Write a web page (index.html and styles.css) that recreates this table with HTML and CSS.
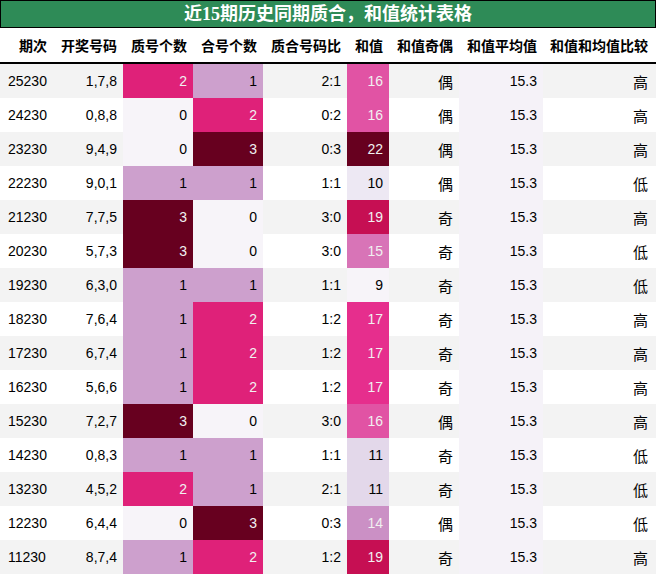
FILE: index.html
```html
<!DOCTYPE html>
<html lang="zh">
<head>
<meta charset="utf-8">
<title>近15期历史同期质合，和值统计表格</title>
<link rel="stylesheet" href="styles.css">
</head>
<body>
<div class="title">近15期历史同期质合，和值统计表格</div>
<table class="stats">
  <colgroup>
    <col class="w-qi"><col class="w-kj"><col class="w-n"><col class="w-n"><col class="w-bi"><col class="w-hz"><col class="w-n"><col class="w-bi"><col class="w-last">
  </colgroup>
  <thead>
    <tr><th>期次</th><th>开奖号码</th><th>质号个数</th><th>合号个数</th><th>质合号码比</th><th>和值</th><th>和值奇偶</th><th>和值平均值</th><th class="last">和值和均值比较</th></tr>
  </thead>
  <tbody>
    <tr><td class="left">25230</td><td>1,7,8</td><td class="q2">2</td><td class="q1">1</td><td>2:1</td><td class="s16">16</td><td class="cjk">偶</td><td class="avg">15.3</td><td class="cjk last">高</td></tr>
    <tr><td class="left">24230</td><td>0,8,8</td><td class="q0">0</td><td class="q2">2</td><td>0:2</td><td class="s16">16</td><td class="cjk">偶</td><td class="avg">15.3</td><td class="cjk last">高</td></tr>
    <tr><td class="left">23230</td><td>9,4,9</td><td class="q0">0</td><td class="q3">3</td><td>0:3</td><td class="s22">22</td><td class="cjk">偶</td><td class="avg">15.3</td><td class="cjk last">高</td></tr>
    <tr><td class="left">22230</td><td>9,0,1</td><td class="q1">1</td><td class="q1">1</td><td>1:1</td><td class="s10">10</td><td class="cjk">偶</td><td class="avg">15.3</td><td class="cjk last">低</td></tr>
    <tr><td class="left">21230</td><td>7,7,5</td><td class="q3">3</td><td class="q0">0</td><td>3:0</td><td class="s19">19</td><td class="cjk">奇</td><td class="avg">15.3</td><td class="cjk last">高</td></tr>
    <tr><td class="left">20230</td><td>5,7,3</td><td class="q3">3</td><td class="q0">0</td><td>3:0</td><td class="s15">15</td><td class="cjk">奇</td><td class="avg">15.3</td><td class="cjk last">低</td></tr>
    <tr><td class="left">19230</td><td>6,3,0</td><td class="q1">1</td><td class="q1">1</td><td>1:1</td><td class="s9">9</td><td class="cjk">奇</td><td class="avg">15.3</td><td class="cjk last">低</td></tr>
    <tr><td class="left">18230</td><td>7,6,4</td><td class="q1">1</td><td class="q2">2</td><td>1:2</td><td class="s17">17</td><td class="cjk">奇</td><td class="avg">15.3</td><td class="cjk last">高</td></tr>
    <tr><td class="left">17230</td><td>6,7,4</td><td class="q1">1</td><td class="q2">2</td><td>1:2</td><td class="s17">17</td><td class="cjk">奇</td><td class="avg">15.3</td><td class="cjk last">高</td></tr>
    <tr><td class="left">16230</td><td>5,6,6</td><td class="q1">1</td><td class="q2">2</td><td>1:2</td><td class="s17">17</td><td class="cjk">奇</td><td class="avg">15.3</td><td class="cjk last">高</td></tr>
    <tr><td class="left">15230</td><td>7,2,7</td><td class="q3">3</td><td class="q0">0</td><td>3:0</td><td class="s16">16</td><td class="cjk">偶</td><td class="avg">15.3</td><td class="cjk last">高</td></tr>
    <tr><td class="left">14230</td><td>0,8,3</td><td class="q1">1</td><td class="q1">1</td><td>1:1</td><td class="s11">11</td><td class="cjk">奇</td><td class="avg">15.3</td><td class="cjk last">低</td></tr>
    <tr><td class="left">13230</td><td>4,5,2</td><td class="q2">2</td><td class="q1">1</td><td>2:1</td><td class="s11">11</td><td class="cjk">奇</td><td class="avg">15.3</td><td class="cjk last">低</td></tr>
    <tr><td class="left">12230</td><td>6,4,4</td><td class="q0">0</td><td class="q3">3</td><td>0:3</td><td class="s14">14</td><td class="cjk">偶</td><td class="avg">15.3</td><td class="cjk last">低</td></tr>
    <tr><td class="left">11230</td><td>8,7,4</td><td class="q1">1</td><td class="q2">2</td><td>1:2</td><td class="s19">19</td><td class="cjk">奇</td><td class="avg">15.3</td><td class="cjk last">高</td></tr>
  </tbody>
</table>
</body>
</html>
```

FILE: styles.css
```css
html, body {
  margin: 0;
  padding: 0;
  background: #ffffff;
}

.title {
  height: 26px;
  line-height: 26px;
  background: #2e8b57;
  border: 1px solid #000000;
  color: #ffffff;
  text-align: center;
  font-family: "Liberation Serif", "Noto Sans CJK SC", serif;
  font-weight: bold;
  font-size: 18px;
  box-sizing: content-box;
  width: 654px;
}

.stats {
  width: 656px;
  table-layout: fixed;
  border-collapse: separate;
  border-spacing: 0;
  font-family: "Liberation Sans", "Noto Sans CJK SC", sans-serif;
  font-size: 14px;
  color: #000000;
}

.w-qi { width: 53px; }
.w-kj { width: 70px; }
.w-n { width: 70px; }
.w-bi { width: 84px; }
.w-hz { width: 42px; }
.w-last { width: 113px; }

.stats th {
  height: 36px;
  padding: 0 6px 0 0;
  text-align: right;
  font-family: "Noto Sans CJK SC", sans-serif;
  font-weight: bold;
  font-size: 14px;
  border-bottom: 2px solid #000000;
  white-space: nowrap;
  box-sizing: border-box;
}

.stats td {
  height: 34px;
  padding: 0 6px 0 0;
  text-align: right;
  box-sizing: border-box;
  white-space: nowrap;
}

.stats .last { padding-right: 8px; }
.stats .left { text-align: left; padding-left: 8px; }
.stats .cjk { font-family: "Noto Sans CJK SC", sans-serif; font-size: 15px; }

.row-odd, .stats tbody tr:nth-child(odd) { background: #f3f3f3; }
.stats tbody tr:nth-child(even) { background: #ffffff; }

/* counts colour scale */
.stats .q0 { background: #f7f4f9; }
.stats .q1 { background: #cda0cd; }
.stats .q2 { background: #df2179; color: #f1f1f1; }
.stats .q3 { background: #67001f; color: #f1f1f1; }

/* sum colour scale */
.stats .s9 { background: #f7f4f9; }
.stats .s10 { background: #ede8f3; }
.stats .s11 { background: #e3d8ea; }
.stats .s14 { background: #cb90c5; color: #f1f1f1; }
.stats .s15 { background: #d874b7; color: #f1f1f1; }
.stats .s16 { background: #e153a4; color: #f1f1f1; }
.stats .s17 { background: #e62e8d; color: #f1f1f1; }
.stats .s19 { background: #c60f53; color: #f1f1f1; }
.stats .s22 { background: #67001f; color: #f1f1f1; }

.stats .avg { background: #f5f2f8; }
```
